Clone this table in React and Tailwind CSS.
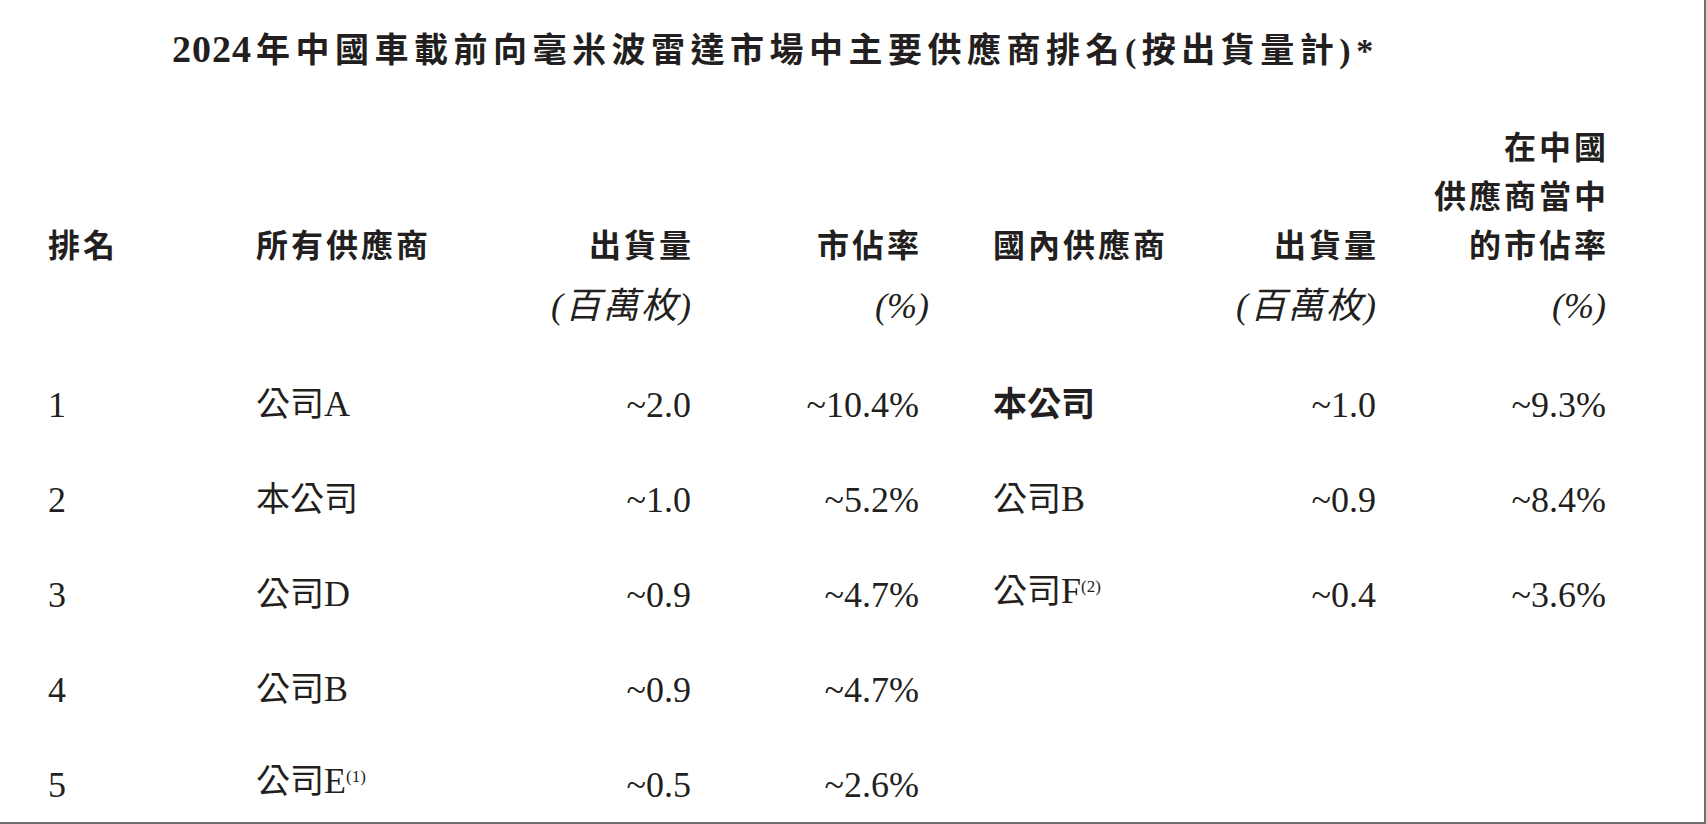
import React from "react"

const rows = [
  { rank: "1", name: "公司", tail: "A", ship: "~2.0", share: "~10.4%", dName: "本公司", dBold: true, dShip: "~1.0", dShare: "~9.3%" },
  { rank: "2", name: "本公司", ship: "~1.0", share: "~5.2%", dName: "公司", dTail: "B", dShip: "~0.9", dShare: "~8.4%" },
  { rank: "3", name: "公司", tail: "D", ship: "~0.9", share: "~4.7%", dName: "公司", dTail: "F", dNote: "(2)", dShip: "~0.4", dShare: "~3.6%" },
  { rank: "4", name: "公司", tail: "B", ship: "~0.9", share: "~4.7%" },
  { rank: "5", name: "公司", tail: "E", note: "(1)", ship: "~0.5", share: "~2.6%" },
]

function Name({ cjk, tail, note, bold }) {
  if (!cjk) return null

  return (
    <span className="whitespace-nowrap">
      <span className={bold ? "text-[34px] font-bold" : "text-[34px]"}>{cjk}</span>
      {tail}
      {note && (
        <span className="relative -top-[11px] text-[17px]">{note}</span>
      )}
    </span>
  )
}

export default function App() {

  return (
    <div className="w-[1706px] h-[824px] overflow-hidden bg-white border-r-2 border-b-2 border-[#6e6e6e] text-[#231f20] font-['Liberation_Serif','Noto_Sans_CJK_TC',serif]">

      {/* title */}
      <h1 className="pt-[24px] pl-[172px] leading-[50px] font-bold whitespace-nowrap">
        <span className="text-[38px] tracking-[1px]">2024</span>
        <span className="ml-[4px] text-[34px] tracking-[5.5px]">年中國車載前向毫米波雷達市場中主要供應商排名(按出貨量計)*</span>
      </h1>

      <div className="pl-[48px] pt-[39px]">

        {/* header */}
        <div className="grid grid-cols-[208px_224px_211px_228px_281px_176px_230px] items-end text-[32px] font-bold leading-[49px] tracking-[3px] font-['Noto_Sans_CJK_TC',sans-serif]">
          <div>排名</div>
          <div>所有供應商</div>
          <div className="text-right -mr-[3px]">出貨量</div>
          <div className="text-right -mr-[3px]">市佔率</div>
          <div className="pl-[74px]">國內供應商</div>
          <div className="text-right -mr-[3px]">出貨量</div>
          <div className="text-right -mr-[3px]">
            在中國<br />供應商當中<br />的市佔率
          </div>
        </div>

        {/* units */}
        <div className="grid grid-cols-[208px_224px_211px_228px_281px_176px_230px] h-[89px] pt-[14px] text-[36px] italic leading-[48px]">
          <div />
          <div />
          <div className="text-right tracking-[2px] -mr-[2px]">(百萬枚)</div>
          <div className="text-right -mr-[10px]">(%)</div>
          <div />
          <div className="text-right tracking-[2px] -mr-[2px]">(百萬枚)</div>
          <div className="text-right">(%)</div>
        </div>

        {/* body */}
        {rows.map((r) => (
          <div
            key={r.rank}
            className="grid grid-cols-[208px_224px_211px_228px_281px_176px_230px] h-[95px] items-center text-[36px] leading-[40px]"
          >
            <div>{r.rank}</div>
            <div><Name cjk={r.name} tail={r.tail} note={r.note} /></div>
            <div className="text-right">{r.ship}</div>
            <div className="text-right">{r.share}</div>
            <div className="pl-[74px]"><Name cjk={r.dName} tail={r.dTail} note={r.dNote} bold={r.dBold} /></div>
            <div className="text-right">{r.dShip}</div>
            <div className="text-right">{r.dShare}</div>
          </div>
        ))}

      </div>

    </div>
  )
}
